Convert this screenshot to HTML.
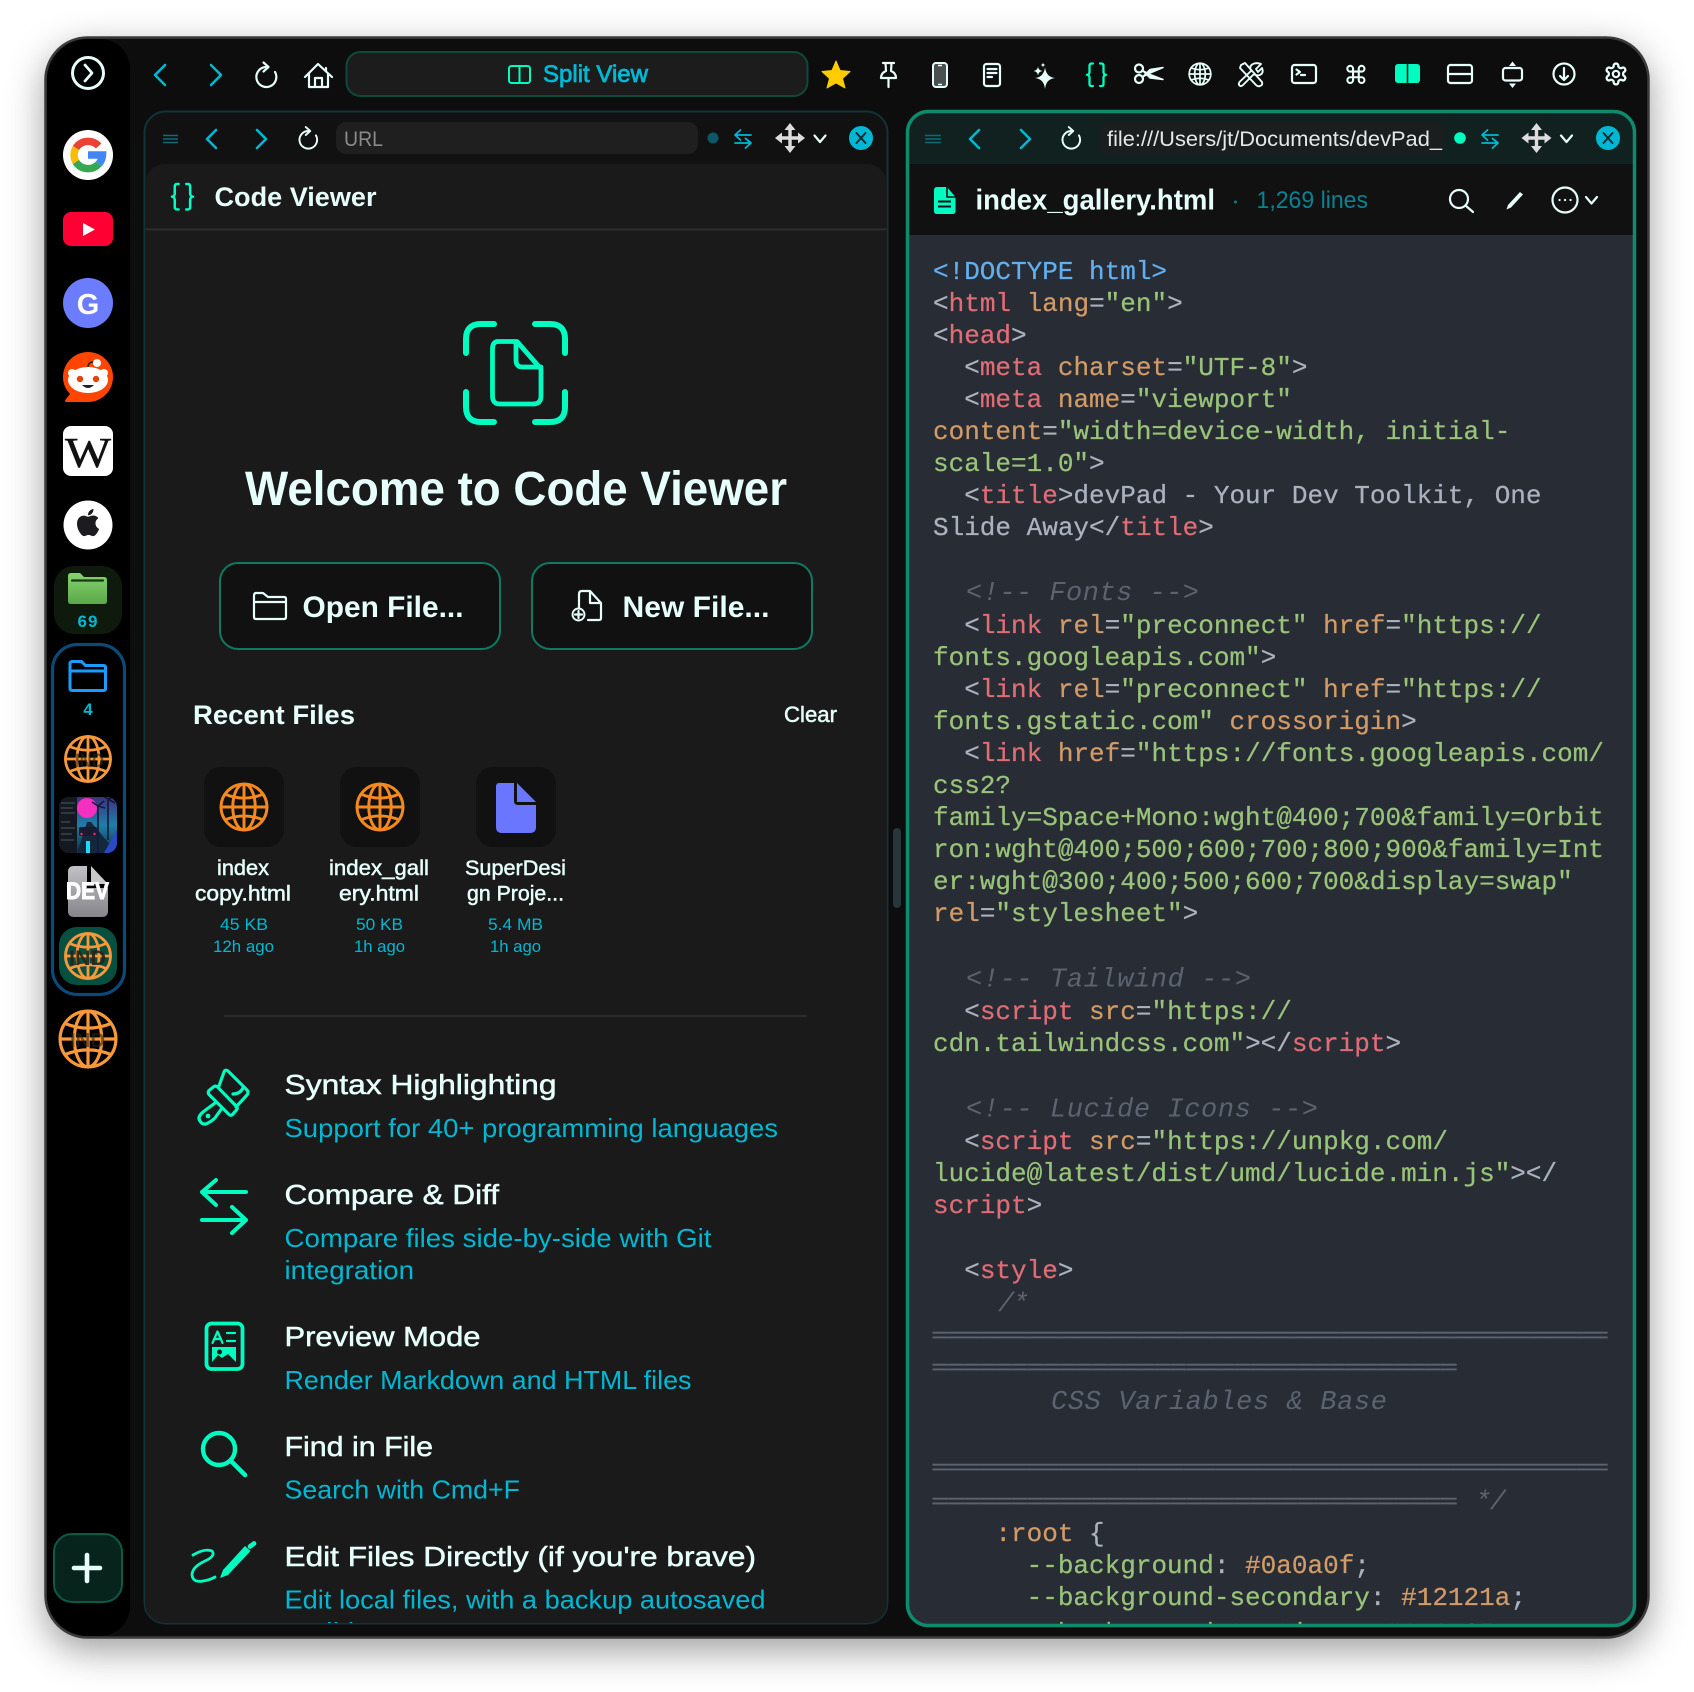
<!DOCTYPE html>
<html lang="en"><head><meta charset="utf-8"><title>Code Viewer</title>
<style>
html,body{margin:0;padding:0;background:#fff;width:1694px;height:1692px;overflow:hidden}
svg{display:block}
text{font-family:"Liberation Sans",sans-serif;white-space:pre}
.w{fill:#e6fffa}.cy{fill:#00b8d4}
.m{stroke-width:.5px;paint-order:stroke}
.w.m{stroke:#e6fffa}.cy.m{stroke:#00b8d4}
.b{font-weight:700}
.code text{font-family:"Liberation Mono","DejaVu Sans Mono",monospace;font-size:26px;fill:#abb2bf;stroke:#abb2bf;stroke-width:.25px}
.code .r{fill:#e06c75;stroke:#e06c75}.code .o{fill:#d19a66;stroke:#d19a66}.code .g{fill:#98c379;stroke:#98c379}
.code text.bl{fill:#61afef;stroke:#61afef}
.code text.c{fill:#5c6370;stroke:none;font-style:italic;font-size:27px}
.code text.e{fill:#5c6370;stroke:none;font-style:normal}
.s{fill:none;stroke:#e6fffa;stroke-width:2.2;stroke-linecap:round;stroke-linejoin:round}
.cyl{fill:none;stroke:#00b8d4;stroke-width:2.6;stroke-linecap:round;stroke-linejoin:round}
.gr{fill:none;stroke:#00fcc0;stroke-linecap:round;stroke-linejoin:round}
.ind{font-weight:700;fill:#2a2218}
</style></head><body>
<svg width="1694" height="1692" viewBox="0 0 1694 1692" xmlns="http://www.w3.org/2000/svg">
<defs>
<filter id="sh" x="-10%" y="-10%" width="120%" height="120%"><feDropShadow dx="0" dy="12" stdDeviation="18" flood-color="#000" flood-opacity=".38"/></filter>
<clipPath id="cpL"><rect x="145" y="112" width="742" height="1511" rx="20"/></clipPath>
<clipPath id="cpR"><rect x="908" y="112" width="725" height="1512" rx="20"/></clipPath>
<clipPath id="cpT"><rect x="59" y="797" width="58" height="56" rx="10"/></clipPath>
<linearGradient id="fg" x1="0" y1="0" x2="0" y2="1"><stop offset="0" stop-color="#86d36f"/><stop offset="1" stop-color="#5aa848"/></linearGradient>
<linearGradient id="dg" x1="0" y1="0" x2="0" y2="1"><stop offset="0" stop-color="#c2c2c6"/><stop offset="1" stop-color="#85858a"/></linearGradient>
<linearGradient id="sw" x1="0" y1="0" x2="0" y2="1"><stop offset="0" stop-color="#40307e"/><stop offset=".5" stop-color="#1e7fa6"/><stop offset="1" stop-color="#12304e"/></linearGradient>
<g id="globe" fill="none" stroke-linecap="round">
<circle cx="0" cy="0" r="22.5"/><ellipse cx="0" cy="0" rx="11" ry="22.5"/><path d="M0-22.5V22.5M-22.5 0H22.5M-18.5-12.5Q0-5 18.5-12.5M-18.5 12.5Q0 5 18.5 12.5"/>
</g>
<g id="rel"><path d="M0-8.5A10 10 0 1 0 9-3.5M-2.5-13L2.5-8.5L-2.5-4"/></g>
<g id="mv"><path d="M-10 0H10M0-10V10" stroke="#ddd" stroke-width="3.4" fill="none"/><path d="M0-15L-5.5-8H5.5ZM0 15L-5.5 8H5.5ZM-15 0L-8-5.5V5.5ZM15 0L8-5.5V5.5Z" fill="#ddd"/></g>
<g id="sw2"><path d="M17 5H1M6.5 0L1 5L6.5 10M1 13H17M11.5 8.500L17 13L11.5 18" fill="none" stroke="#00b8d4" stroke-width="1.8" stroke-linecap="round" stroke-linejoin="round"/></g>
<g id="brace"><path d="M6 0H4.5Q2.5 0 2.5 2.5V9Q2.5 11.5 0 12Q2.5 12.5 2.5 15V21.5Q2.5 24 4.5 24H6M13 0H14.5Q16.5 0 16.5 2.5V9Q16.5 11.5 19 12Q16.5 12.5 16.5 15V21.5Q16.5 24 14.5 24H13" fill="none" stroke="#00fcc0" stroke-width="2.300" stroke-linecap="round" stroke-linejoin="round"/></g>
</defs>

<!-- window -->
<rect x="45.5" y="37.5" width="1603" height="1600" rx="42" fill="#111" stroke="#3a3a3a" stroke-width="2.5" filter="url(#sh)"/>
<path d="M88 39H100a30 30 0 0 1 30 30V1606a30 30 0 0 1-30 30H88a41 41 0 0 1-41-41V80a41 41 0 0 1 41-41z" fill="#000"/>

<!-- sidebar -->
<circle cx="88" cy="73" r="15.5" fill="none" stroke="#e6fffa" stroke-width="3"/><path d="M85 65L92 73L85 81" fill="none" stroke="#e6fffa" stroke-width="2.8" stroke-linecap="round" stroke-linejoin="round"/>
<circle cx="88" cy="155" r="25" fill="#fff"/>
<g fill="none" stroke-width="7.5"><path d="M98.7 146A14.5 14.5 0 0 0 75.9 148" stroke="#ea4335"/><path d="M75.9 148A14.5 14.5 0 0 0 75.9 162" stroke="#fbbc05"/><path d="M75.9 162A14.5 14.5 0 0 0 98.7 164" stroke="#34a853"/><path d="M98.7 164A14.5 14.5 0 0 0 102.5 155H88" stroke="#4285f4"/></g>
<rect x="63" y="212" width="50" height="34" rx="8" fill="#ff0033"/><path d="M83 223L95 229.5L83 236Z" fill="#fff"/>
<circle cx="88" cy="303" r="25" fill="#6c7cff"/><text x="88" y="314" text-anchor="middle" class="b" font-size="29" fill="#fff">G</text>
<path d="M63 377A25 25 0 1 1 88 402H66Q64 402 66 399L70 394Q63 387 63 377Z" fill="#ff4500"/>
<ellipse cx="88" cy="380" rx="20" ry="13" fill="#fff"/><circle cx="72" cy="373" r="4" fill="#fff"/><circle cx="104" cy="373" r="4" fill="#fff"/>
<circle cx="80" cy="379" r="3.2" fill="#e8410a"/><circle cx="96" cy="379" r="3.2" fill="#e8410a"/><path d="M82 385Q88 391 94 385Z" fill="#222"/>
<path d="M88 367Q88 361 96 362" fill="none" stroke="#222" stroke-width="1.5"/><circle cx="97" cy="363" r="4" fill="#fff"/>
<rect x="63" y="426" width="50" height="50" rx="8" fill="#fff"/><text x="65" y="467" textLength="46" lengthAdjust="spacingAndGlyphs" font-size="42" style="font-family:'Liberation Serif',serif" fill="#111" stroke="#111" stroke-width=".5">W</text>
<circle cx="88" cy="525" r="24.5" fill="#fff"/><path transform="translate(74.5 509) scale(1.13)" fill="#1c1c1e" d="M12.152 6.896c-.948 0-2.415-1.078-3.96-1.04-2.04.027-3.91 1.183-4.961 3.014-2.117 3.675-.546 9.103 1.519 12.09 1.013 1.454 2.208 3.09 3.792 3.039 1.52-.065 2.09-.987 3.935-.987 1.831 0 2.35.987 3.96.948 1.637-.026 2.676-1.48 3.676-2.948 1.156-1.688 1.636-3.325 1.662-3.415-.039-.013-3.182-1.221-3.22-4.857-.026-3.04 2.48-4.494 2.597-4.559-1.429-2.09-3.623-2.324-4.39-2.376-2-.156-3.675 1.09-4.61 1.09zM15.53 3.83c.843-1.012 1.4-2.427 1.245-3.83-1.207.052-2.662.805-3.532 1.818-.78.896-1.454 2.338-1.273 3.714 1.338.104 2.715-.688 3.559-1.701"/>
<rect x="54" y="566" width="68" height="68" rx="20" fill="#0e1a0c"/>
<path d="M68 576q0-3 3-3h9l4 4h20q3 0 3 3v21q0 3-3 3H71q-3 0-3-3z" fill="url(#fg)"/><path d="M72 580.500H103" stroke="#173a14" stroke-width="2.2" stroke-linecap="round"/>
<text x="88" y="627" text-anchor="middle" class="b cy" font-size="17" letter-spacing="1">69</text>
<rect x="52.5" y="644.5" width="72" height="350" rx="25" fill="none" stroke="#0a4a78" stroke-width="3.2"/>
<path d="M70 664q0-2.500 2.500-2.500h9l4 4h18q2 0 2 2v21q0 2-2 2H72.500q-2.500 0-2.500-2.500zM70 671H105" fill="none" stroke="#1a9cff" stroke-width="3"/>
<text x="88" y="715" text-anchor="middle" class="b cy" font-size="17">4</text>
<use href="#globe" x="0" y="0" transform="translate(88 759)" stroke="#f7983a" stroke-width="2.8"/>
<text x="75" y="767" textLength="29" lengthAdjust="spacingAndGlyphs" font-size="19" class="ind" opacity=".6">IND</text>
<g clip-path="url(#cpT)">
<rect x="59" y="797" width="58" height="56" fill="url(#sw)"/>
<circle cx="87" cy="808" r="10" fill="#f52fc0"/>
<path d="M77 853L87 822H91L117 853Z" fill="#14283c"/><path d="M117 830V853H104Z" fill="#2a48c8"/>
<path d="M98 853V806M98 806L92 802M98 806L104 801M98 806L105 808M108 840V799M108 799L103 796M108 799L114 797M108 799L115 803" stroke="#0f1a3c" stroke-width="1.600" fill="none"/>
<rect x="79" y="827" width="18" height="9" rx="2" fill="#1b1a30"/><circle cx="81.500" cy="834" r="1.200" fill="#ff2a6a"/><circle cx="94.500" cy="834" r="1.200" fill="#ff2a6a"/>
<path d="M88 841V853" stroke="#1bdcff" stroke-width="4"/>
<rect x="59" y="797" width="18" height="56" fill="#141820"/><path d="M61 803H75M61 808H73M61 813H75M61 822H70M61 828H75M61 834H72M61 840H74" stroke="#4c585e" stroke-width="1"/>
</g>
<path d="M74 866H87V888H108V911q0 6-6 6H74q-6 0-6-6V872q0-6 6-6z" fill="url(#dg)"/><path d="M91 866L108 884H91Z" fill="#c9c9cc"/><path d="M88.500 866V886H108" fill="none" stroke="#000" stroke-width="3"/>
<text x="66" y="899" textLength="43" lengthAdjust="spacingAndGlyphs" class="b" font-size="24" fill="#fff" stroke="#fff" stroke-width=".9">DEV</text>
<rect x="59" y="927" width="58" height="58" rx="18" fill="#075040"/>
<use href="#globe" transform="translate(88 956)" stroke="#f7983a" stroke-width="2.8"/>
<text x="69" y="965" textLength="37" lengthAdjust="spacingAndGlyphs" font-size="21" class="ind" opacity=".9">IND</text>
<use href="#globe" transform="translate(88 1039) scale(1.24)" stroke="#f7983a" stroke-width="2.6"/>
<text x="70" y="1047" textLength="35" lengthAdjust="spacingAndGlyphs" font-size="20" class="ind" opacity=".6">IND</text>
<rect x="54" y="1534" width="68" height="68" rx="18" fill="#06241c" stroke="#0c5a45" stroke-width="2"/>
<path d="M87 1555V1581M74 1568H100" stroke="#e6fffa" stroke-width="4.6" stroke-linecap="round"/>

<!-- top toolbar -->
<path d="M165 65L155 75L165 85M211 65L221 75L211 85" class="cyl"/>
<use href="#rel" transform="translate(266 75.500)" class="s"/>
<path d="M305 77L318 64L332 77M309 74V87H328V74M315 87V78H322V87M326 68V71" class="s"/>
<rect x="346.500" y="52" width="461" height="44" rx="14" fill="#1c1c1c" stroke="#0e4a3c" stroke-width="2"/>
<rect x="509" y="66" width="21" height="17" rx="2.500" fill="none" stroke="#00fcc0" stroke-width="2"/><path d="M519.500 66V83" stroke="#00fcc0" stroke-width="2"/>
<text x="543" y="82" textLength="105" lengthAdjust="spacingAndGlyphs" font-size="24" class="cy m" style="stroke-width:.8px">Split View</text>
<path d="M836 61L840 70.500L850 71.500L842.500 78.500L845 88L836 83L827 88L829.500 78.500L822 71.500L832 70.500Z" fill="#ffcc00" stroke="#ffcc00" stroke-linejoin="round"/>
<!-- pin -->
<path d="M883 63H894M885.500 63L886 71Q881 73 881 78H896Q896 73 891 71L891.500 63M888.500 78V87" class="s"/>
<!-- phone -->
<rect x="933" y="63" width="14" height="24" rx="3" fill="#4a5050" stroke="#e6fffa" stroke-width="2"/><path d="M938 65.500H942M938 84.500H942" stroke="#e6fffa" stroke-width="1.500"/>
<!-- doc -->
<rect x="984" y="64" width="16" height="22" rx="2.500" class="s"/><path d="M987.500 69H996.500M987.500 73H996.500M987.500 77H992" class="s" stroke-width="1.500"/>
<!-- sparkle -->
<path d="M1045 67Q1046 77 1055 78Q1046 79 1045 89Q1044 79 1035 78Q1044 77 1045 67ZM1038 66.500Q1038.500 70.500 1042.500 71Q1038.500 71.500 1038 75.500Q1037.500 71.500 1033.500 71Q1037.500 70.500 1038 66.500ZM1043 62.500Q1043.300 64.700 1045.500 65Q1043.300 65.300 1043 67.500Q1042.700 65.300 1040.500 65Q1042.700 64.700 1043 62.500Z" fill="#e6fffa"/>
<use href="#brace" transform="translate(1087 63.500) scale(1 .94)"/>
<!-- scissors -->
<circle cx="1139" cy="68.500" r="4" class="s"/><circle cx="1139" cy="79" r="4" class="s"/><path d="M1142.500 70.500L1150 74.500L1163 79.500L1150 78ZM1142.500 77L1150 73L1163 67.500L1150 69.500Z" fill="#e6fffa" stroke="#e6fffa" stroke-width="1.500" stroke-linejoin="round"/>
<!-- web -->
<use href="#globe" transform="translate(1200 74) scale(.48)" stroke="#e6fffa" stroke-width="3.600"/>
<!-- tools -->
<path d="M1241 65L1245 63L1262 82Q1263 85 1260 86Q1258 87 1256 85L1240 68ZM1261 64L1256 69L1258 72L1262 68Q1264 73 1260 75Q1256 76 1254 74L1243 85Q1241 87 1239.500 85.500Q1238 83.500 1240 81.500L1251 71Q1249 67 1252 64.500Q1256 62 1261 64Z" fill="none" stroke="#e6fffa" stroke-width="1.900" stroke-linejoin="round"/>
<!-- terminal -->
<rect x="1292" y="65" width="24" height="18" rx="2.500" class="s"/><path d="M1296.500 69.500L1300 72L1296.500 74.500M1301 75H1305" class="s" stroke-width="1.500"/>
<!-- cmd -->
<path transform="translate(1344.500 63) scale(.95)" d="M15 6v12a3 3 0 1 0 3-3H6a3 3 0 1 0 3 3V6a3 3 0 1 0-3 3h12a3 3 0 1 0-3-3" class="s"/>
<rect x="1395" y="64" width="25" height="19" rx="3" fill="#00fcc0"/><path d="M1407.500 64V83" stroke="#111" stroke-width="1.500"/>
<rect x="1448" y="65" width="24" height="18" rx="2.500" class="s"/><path d="M1448 74H1472" class="s"/>
<rect x="1503" y="68" width="19" height="12.500" rx="2.500" class="s"/><path d="M1512.500 61.500L1516 66H1509ZM1512.500 88L1516 83.500H1509Z" fill="#e6fffa"/>
<circle cx="1564" cy="74" r="10.500" class="s"/><path d="M1564 68V80M1560 76L1564 80L1568 76" class="s" stroke-width="1.900"/>
<g transform="translate(1603.500 61.500) scale(1.04)"><path d="M12.220 2h-.44a2 2 0 0 0-2 2v.18a2 2 0 0 1-1 1.730l-.43.250a2 2 0 0 1-2 0l-.150-.080a2 2 0 0 0-2.730.730l-.220.380a2 2 0 0 0 .730 2.730l.150.100a2 2 0 0 1 1 1.720v.510a2 2 0 0 1-1 1.740l-.150.090a2 2 0 0 0-.730 2.730l.220.380a2 2 0 0 0 2.730.730l.150-.080a2 2 0 0 1 2 0l.430.250a2 2 0 0 1 1 1.730V20a2 2 0 0 0 2 2h.44a2 2 0 0 0 2-2v-.18a2 2 0 0 1 1-1.730l.430-.250a2 2 0 0 1 2 0l.150.080a2 2 0 0 0 2.730-.730l.220-.390a2 2 0 0 0-.730-2.730l-.150-.080a2 2 0 0 1-1-1.740v-.5a2 2 0 0 1 1-1.740l.150-.090a2 2 0 0 0 .730-2.730l-.220-.380a2 2 0 0 0-2.730-.730l-.150.080a2 2 0 0 1-2 0l-.430-.250a2 2 0 0 1-1-1.730V4a2 2 0 0 0-2-2z" class="s"/><circle cx="12" cy="12" r="3" class="s"/></g>

<!-- left panel -->
<rect x="144.500" y="111.500" width="743" height="1512" rx="21" fill="#111" stroke="#12333a" stroke-width="2"/>
<g clip-path="url(#cpL)">
<path d="M145 184a20 20 0 0 1 20-20H867a20 20 0 0 1 20 20V1624H145Z" fill="#1a1a1a"/>
<path d="M145 229.500H887" stroke="#2c2c2c" stroke-width="2"/>
<path d="M163 135.500H178M163 139H178M163 142.500H178" stroke="#0c6b7c" stroke-width="1.600"/>
<path d="M216 130L207 139L216 148M257 130L266 139L257 148" class="cyl" stroke-width="2.200"/>
<use href="#rel" transform="translate(308 138.500) scale(.88)" class="s"/>
<rect x="336" y="122" width="362" height="32" rx="10" fill="#1f1f1f"/>
<text x="344" y="146" textLength="39" lengthAdjust="spacingAndGlyphs" font-size="21" fill="#8a8a8a">URL</text>
<circle cx="713" cy="138" r="5.500" fill="#0d5866"/>
<use href="#sw2" transform="translate(734 130)"/>
<use href="#mv" transform="translate(790 138)"/>
<path d="M814.500 135.500L820 142L825.500 135.500" class="s"/>
<circle cx="861" cy="138" r="12" fill="#00b8d4"/><path d="M856.500 133L865.500 143M865.500 133L856.500 143" stroke="#0b2a30" stroke-width="2" stroke-linecap="round"/>
<use href="#brace" transform="translate(172 184) scale(1.1 1.06)"/>
<text x="214.500" y="206" textLength="162" lengthAdjust="spacingAndGlyphs" font-size="27" class="w b">Code Viewer</text>

<!-- scanner icon -->
<path d="M466 353V339Q466 324 481 324H494M535 324H550Q565 324 565 339V353M466 392V407Q466 422 481 422H494M535 422H550Q565 422 565 407V392" class="gr" stroke-width="6"/>
<path d="M498 341.500H517L541 369V396Q541 404 533 404H500Q492.500 404 492.500 396V349Q492.500 341.500 498 341.500ZM516 342V360Q516 367 522 367H541" class="gr" stroke-width="4.800"/>
<text x="245" y="505" textLength="542" lengthAdjust="spacingAndGlyphs" font-size="48" class="w b">Welcome to Code Viewer</text>

<!-- buttons -->
<rect x="220" y="563" width="280" height="86" rx="18" fill="#111" stroke="#0e7a62" stroke-width="2"/>
<rect x="532" y="563" width="280" height="86" rx="18" fill="#111" stroke="#0e7a62" stroke-width="2"/>
<path d="M254 596V617Q254 619 256 619H284Q286 619 286 617V599Q286 597 284 597H268L263 593H256Q254 593 254 596ZM254 602H286" class="s"/>
<text x="302.500" y="617" textLength="161" lengthAdjust="spacingAndGlyphs" font-size="30" class="w b">Open File...</text>
<path d="M579 608V594Q579 591 582 591H590L601 603V618Q601 620 599 620H588M590 591V603H601" class="s" stroke-width="1.900"/>
<circle cx="578.500" cy="614.500" r="6" fill="#111" stroke="#e6fffa" stroke-width="1.900"/><path d="M578.500 611V618M575 614.500H582" class="s" stroke-width="1.700"/>
<text x="622.500" y="617" textLength="147" lengthAdjust="spacingAndGlyphs" font-size="30" class="w b">New File...</text>

<!-- recent -->
<text x="193" y="724" textLength="162" lengthAdjust="spacingAndGlyphs" font-size="27" class="w b">Recent Files</text>
<text x="784" y="722" textLength="53" lengthAdjust="spacingAndGlyphs" font-size="22" class="w m">Clear</text>
<rect x="204" y="767" width="80" height="80" rx="17" fill="#111"/><rect x="340" y="767" width="80" height="80" rx="17" fill="#111"/><rect x="476" y="767" width="80" height="80" rx="17" fill="#111"/>
<use href="#globe" transform="translate(244 807) scale(1.02)" stroke="#f5891f" stroke-width="2.900"/>
<use href="#globe" transform="translate(380 807) scale(1.02)" stroke="#f5891f" stroke-width="2.900"/>
<path d="M499 783H514V801Q514 805 518 805H536V827Q536 833 530 833H502Q496 833 496 827V787Q496 783 499 783ZM517 783L536 802H517Z" fill="#6b76ff"/>
<g font-size="21.500" class="w">
<text x="217" y="875" textLength="52" lengthAdjust="spacingAndGlyphs" class="w m">index</text>
<text x="195" y="900.500" textLength="96" lengthAdjust="spacingAndGlyphs" class="w m">copy.html</text>
<text x="329" y="875" textLength="100" lengthAdjust="spacingAndGlyphs" class="w m">index_gall</text>
<text x="339" y="900.500" textLength="80" lengthAdjust="spacingAndGlyphs" class="w m">ery.html</text>
<text x="465" y="875" textLength="101" lengthAdjust="spacingAndGlyphs" class="w m">SuperDesi</text>
<text x="467" y="900.500" textLength="97" lengthAdjust="spacingAndGlyphs" class="w m">gn Proje...</text>
</g>
<g font-size="17">
<text x="220" y="930" textLength="48" lengthAdjust="spacingAndGlyphs" class="cy">45 KB</text>
<text x="213" y="952" textLength="61" lengthAdjust="spacingAndGlyphs" class="cy">12h ago</text>
<text x="356" y="930" textLength="47" lengthAdjust="spacingAndGlyphs" class="cy">50 KB</text>
<text x="354" y="952" textLength="51" lengthAdjust="spacingAndGlyphs" class="cy">1h ago</text>
<text x="488" y="930" textLength="55" lengthAdjust="spacingAndGlyphs" class="cy">5.4 MB</text>
<text x="490" y="952" textLength="51" lengthAdjust="spacingAndGlyphs" class="cy">1h ago</text>
</g>
<path d="M224 1016H807" stroke="#2c2c2c" stroke-width="2"/>

<!-- features -->
<!-- brush -->
<path d="M219 1086L224 1072Q225 1069 228 1071L247 1090Q249 1092 247 1095L236 1107M233 1094Q240 1094 243 1088" class="gr" stroke-width="3.200"/>
<path d="M209 1090.500L214 1086.500Q216 1085.500 217.500 1087L236.500 1106.500Q238 1108 236.500 1110L232.500 1114.500Q231 1116 229 1114.500L209 1094.500Q207.500 1092.500 209 1090.500Z" class="gr" stroke-width="3.200"/>
<path d="M215 1103L203 1112Q197 1117 200 1121Q203 1126 208 1123Q212 1121 215 1118L222 1108" class="gr" stroke-width="3.200"/><circle cx="208" cy="1116" r="2.400" fill="#00fcc0"/>
<path d="M246 1192H202M216 1180L202 1192L216 1205M202 1220H246M232 1207L246 1220L232 1233" class="gr" stroke-width="4"/>
<rect x="206.500" y="1323.500" width="36" height="45.500" rx="5" class="gr" stroke-width="3.800"/>
<path d="M212.500 1343L217.500 1331.500L222.500 1343M214 1339H221M227 1333H235M227 1341H235" class="gr" stroke-width="2.200"/>
<path d="M212 1347H236V1362L228 1354L222 1358L218 1355L212 1362Z" fill="#00fcc0"/><circle cx="219.500" cy="1352" r="2.500" fill="#1a1a1a"/>
<circle cx="219" cy="1449" r="16" class="gr" stroke-width="4.400"/><path d="M231 1461L245 1475" class="gr" stroke-width="4.600"/>
<!-- scribble pencil -->
<path d="M193 1555Q205 1548 212 1551Q216 1556 205 1561Q192 1567 192 1575Q193 1583 203 1581Q210 1580 215 1577" class="gr" stroke-width="2.800"/>
<path d="M220 1578L223 1570L245 1546L250.500 1551L228 1575Z" fill="#00fcc0"/><path d="M250 1546.500L254 1543.500" class="gr" stroke-width="4.800"/>

<g font-size="28">
<text x="284.500" y="1094" textLength="272" lengthAdjust="spacingAndGlyphs" class="w m">Syntax Highlighting</text>
<text x="284.500" y="1204" textLength="214.500" lengthAdjust="spacingAndGlyphs" class="w m">Compare &amp; Diff</text>
<text x="284.500" y="1346" textLength="196" lengthAdjust="spacingAndGlyphs" class="w m">Preview Mode</text>
<text x="284.500" y="1456" textLength="148.500" lengthAdjust="spacingAndGlyphs" class="w m">Find in File</text>
<text x="284.500" y="1566" textLength="471.500" lengthAdjust="spacingAndGlyphs" class="w m">Edit Files Directly (if you're brave)</text>
</g>
<g font-size="26">
<text x="284.500" y="1137" textLength="493.500" lengthAdjust="spacingAndGlyphs" class="cy">Support for 40+ programming languages</text>
<text x="284.500" y="1247" textLength="427" lengthAdjust="spacingAndGlyphs" class="cy">Compare files side-by-side with Git</text>
<text x="284.500" y="1279" textLength="129.500" lengthAdjust="spacingAndGlyphs" class="cy">integration</text>
<text x="284.500" y="1389" textLength="407" lengthAdjust="spacingAndGlyphs" class="cy">Render Markdown and HTML files</text>
<text x="284.500" y="1498.500" textLength="235.500" lengthAdjust="spacingAndGlyphs" class="cy">Search with Cmd+F</text>
<text x="284.500" y="1608.500" textLength="481" lengthAdjust="spacingAndGlyphs" class="cy">Edit local files, with a backup autosaved</text>
<text x="284.500" y="1641" textLength="78" lengthAdjust="spacingAndGlyphs" class="cy">toolkit</text>
</g>
</g>

<!-- resize handle -->
<rect x="893" y="828" width="8" height="80" rx="4" fill="#26363c"/>

<!-- right panel -->
<g clip-path="url(#cpR)">
<rect x="906" y="110" width="730" height="55" fill="#10211f"/>
<rect x="906" y="164" width="730" height="71" fill="#111"/>
<rect x="906" y="235" width="730" height="1392" fill="#282c34"/>
<path d="M925 135.500H941M925 139H941M925 142.500H941" stroke="#0c6b7c" stroke-width="1.600"/>
<path d="M979 130L970 139L979 148M1021 130L1030 139L1021 148" class="cyl" stroke-width="2.200"/>
<use href="#rel" transform="translate(1071 138.500) scale(.88)" class="s"/>
<rect x="1099" y="122" width="346" height="32" rx="10" fill="#1b1e1e"/>
<text x="1107" y="146" textLength="335" lengthAdjust="spacingAndGlyphs" font-size="21" fill="#e4e8e8">file:///Users/jt/Documents/devPad_</text>
<circle cx="1460" cy="138" r="5.800" fill="#00fcc0"/>
<use href="#sw2" transform="translate(1481 130)"/>
<use href="#mv" transform="translate(1536.500 138)"/>
<path d="M1561 135.500L1566.500 142L1572 135.500" class="s"/>
<circle cx="1608" cy="138" r="12" fill="#00b8d4"/><path d="M1603.500 133L1612.500 143M1612.500 133L1603.500 143" stroke="#0b2a30" stroke-width="2" stroke-linecap="round"/>
<path d="M937 187H947L955.500 197V211Q955.500 214 952.500 214H937Q934 214 934 211V190Q934 187 937 187Z" fill="#00fcc0"/><path d="M947 187V197H955.500" fill="none" stroke="#111" stroke-width="1.600"/><path d="M938 201.500H951M938 206.500H951" stroke="#111" stroke-width="2"/>
<text x="975.500" y="209.500" textLength="239.500" lengthAdjust="spacingAndGlyphs" font-size="29" class="w b">index_gallery.html</text>
<circle cx="1235.500" cy="202" r="1.500" fill="#0a7f8f"/>
<text x="1256.500" y="208" textLength="111.500" lengthAdjust="spacingAndGlyphs" font-size="24" fill="#0a8292">1,269 lines</text>
<circle cx="1459" cy="199" r="9" class="s"/><path d="M1465.500 205.500L1473 212" class="s"/>
<path d="M1506.500 209.500L1508 205L1520 192L1523 194.500L1511 207.500Z" fill="#e6fffa"/>
<circle cx="1565" cy="200" r="12.500" class="s" stroke-width="1.900"/><path d="M1559.500 200h.1M1565 200h.1M1570.500 200h.1" class="s" stroke-width="2.800"/>
<path d="M1586 197L1591.500 203.500L1597 197" class="s"/>

<g class="code">
<text x="933" y="279" class="bl">&lt;!DOCTYPE html&gt;</text>
<text x="933" y="311">&lt;<tspan class="r">html</tspan> <tspan class="o">lang</tspan>=<tspan class="g">"en"</tspan>&gt;</text>
<text x="933" y="343">&lt;<tspan class="r">head</tspan>&gt;</text>
<text x="933" y="375">  &lt;<tspan class="r">meta</tspan> <tspan class="o">charset</tspan>=<tspan class="g">"UTF-8"</tspan>&gt;</text>
<text x="933" y="407">  &lt;<tspan class="r">meta</tspan> <tspan class="o">name</tspan>=<tspan class="g">"viewport"</tspan></text>
<text x="933" y="439"><tspan class="o">content</tspan>=<tspan class="g">"width=device-width, initial-</tspan></text>
<text x="933" y="471"><tspan class="g">scale=1.0"</tspan>&gt;</text>
<text x="933" y="503">  &lt;<tspan class="r">title</tspan>&gt;devPad - Your Dev Toolkit, One</text>
<text x="933" y="535">Slide Away&lt;/<tspan class="r">title</tspan>&gt;</text>
<text x="966" y="600" class="c" textLength="233">&lt;!-- Fonts --&gt;</text>
<text x="933" y="633">  &lt;<tspan class="r">link</tspan> <tspan class="o">rel</tspan>=<tspan class="g">"preconnect"</tspan> <tspan class="o">href</tspan>=<tspan class="g">"https://</tspan></text>
<text x="933" y="665"><tspan class="g">fonts.googleapis.com"</tspan>&gt;</text>
<text x="933" y="697">  &lt;<tspan class="r">link</tspan> <tspan class="o">rel</tspan>=<tspan class="g">"preconnect"</tspan> <tspan class="o">href</tspan>=<tspan class="g">"https://</tspan></text>
<text x="933" y="729"><tspan class="g">fonts.gstatic.com"</tspan> <tspan class="o">crossorigin</tspan>&gt;</text>
<text x="933" y="761">  &lt;<tspan class="r">link</tspan> <tspan class="o">href</tspan>=<tspan class="g">"https://fonts.googleapis.com/</tspan></text>
<text x="933" y="793"><tspan class="g">css2?</tspan></text>
<text x="933" y="825"><tspan class="g">family=Space+Mono:wght@400;700&amp;family=Orbit</tspan></text>
<text x="933" y="857"><tspan class="g">ron:wght@400;500;600;700;800;900&amp;family=Int</tspan></text>
<text x="933" y="889"><tspan class="g">er:wght@300;400;500;600;700&amp;display=swap"</tspan></text>
<text x="933" y="921"><tspan class="o">rel</tspan>=<tspan class="g">"stylesheet"</tspan>&gt;</text>
<text x="966" y="986.500" class="c" textLength="285">&lt;!-- Tailwind --&gt;</text>
<text x="933" y="1019">  &lt;<tspan class="r">script</tspan> <tspan class="o">src</tspan>=<tspan class="g">"https://</tspan></text>
<text x="933" y="1051"><tspan class="g">cdn.tailwindcss.com"</tspan>&gt;&lt;/<tspan class="r">script</tspan>&gt;</text>
<text x="966" y="1116.500" class="c" textLength="352">&lt;!-- Lucide Icons --&gt;</text>
<text x="933" y="1149">  &lt;<tspan class="r">script</tspan> <tspan class="o">src</tspan>=<tspan class="g">"https://unpkg.com/</tspan></text>
<text x="933" y="1181"><tspan class="g">lucide@latest/dist/umd/lucide.min.js"</tspan>&gt;&lt;/</text>
<text x="933" y="1213"><tspan class="r">script</tspan>&gt;</text>
<text x="933" y="1278">  &lt;<tspan class="r">style</tspan>&gt;</text>
<text x="998" y="1311" class="c" textLength="31">/*</text>
<text x="932.500" y="1343" class="e" textLength="675">═══════════════════════════════════════════</text>
<text x="932.500" y="1375" class="e" textLength="524">═════════════════════════════════</text>
<text x="1051" y="1409" class="c" textLength="336">CSS Variables &amp; Base</text>
<text x="932.500" y="1475" class="e" textLength="675">═══════════════════════════════════════════</text>
<text x="932.500" y="1509" class="e" textLength="524">═════════════════════════════════</text>
<text x="1475" y="1509" class="c" textLength="31">*/</text>
<text x="933" y="1541">    <tspan class="o">:root</tspan> {</text>
<text x="933" y="1573">      <tspan class="g">--background</tspan>: <tspan class="o">#0a0a0f</tspan>;</text>
<text x="933" y="1605">      <tspan class="g">--background-secondary</tspan>: <tspan class="o">#12121a</tspan>;</text>
<text x="933" y="1641">      <tspan class="g">--background-tertiary</tspan>: <tspan class="o">#1a1a25</tspan>;</text>
</g>
</g>
<rect x="907.500" y="111.500" width="727" height="1514" rx="21" fill="none" stroke="#0e8a6c" stroke-width="3.500"/>
</svg>
</body></html>
